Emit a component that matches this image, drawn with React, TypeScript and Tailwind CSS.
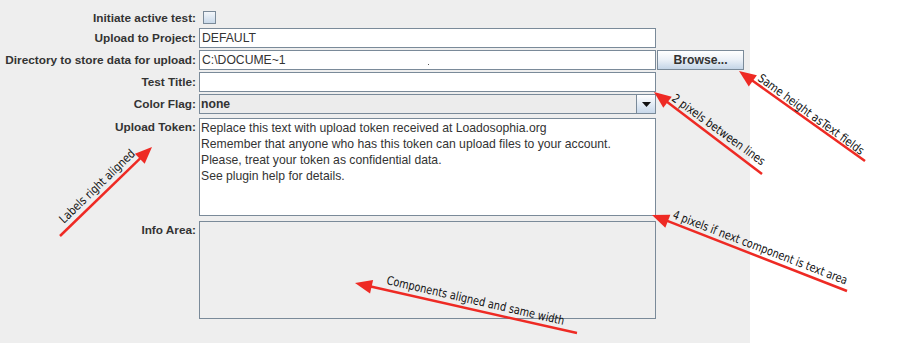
import React from 'react';

const RED = '#ee2a24';

type Note = {
  x1: number; y1: number; x2: number; y2: number;
  text: string; tx: number; ty: number; angle: number; len: number;
};

const notes: Note[] = [
  { x1: 865, y1: 161, x2: 739, y2: 71, text: 'Same height asText fields', tx: 757, ty: 80, angle: 36, len: 128 },
  { x1: 762, y1: 174, x2: 654, y2: 92, text: '2 pixels between lines', tx: 671, ty: 100, angle: 36, len: 112 },
  { x1: 60, y1: 236, x2: 152, y2: 147, text: 'Labels right aligned', tx: 64, ty: 224, angle: -44, len: 100 },
  { x1: 847, y1: 291, x2: 652, y2: 215, text: '4 pixels if next component is text area', tx: 672, ty: 218, angle: 21, len: 186 },
  { x1: 577, y1: 333, x2: 355, y2: 283, text: 'Components aligned and same width', tx: 386, ty: 284, angle: 13, len: 182 },
];

function Arrow({ n }: { n: Note }) {
  const dx = n.x2 - n.x1;
  const dy = n.y2 - n.y1;
  const d = Math.hypot(dx, dy);
  const ux = dx / d;
  const uy = dy / d;
  const bx = n.x2 - ux * 17;
  const by = n.y2 - uy * 17;
  const px = -uy * 7;
  const py = ux * 7;
  return (
    <g>
      <line x1={n.x1} y1={n.y1} x2={bx + ux * 2} y2={by + uy * 2} stroke={RED} strokeWidth={2.5} />
      <polygon points={`${n.x2},${n.y2} ${bx + px},${by + py} ${bx - px},${by - py}`} fill={RED} />
      <text
        x={n.tx}
        y={n.ty}
        transform={`rotate(${n.angle} ${n.tx} ${n.ty})`}
        textLength={n.len}
        lengthAdjust="spacingAndGlyphs"
        fontSize={12}
        fontFamily="'DejaVu Sans', Verdana, sans-serif"
        fill="#111"
      >
        {n.text}
      </text>
    </g>
  );
}

function Label({ children, top }: { children: React.ReactNode; top?: boolean }) {
  return (
    <div className={`w-[196px] shrink-0 text-right font-bold text-[11.8px] leading-[16px] text-[#333333] ${top ? 'pt-px' : ''}`}>
      {children}
    </div>
  );
}

function Field({ value }: { value?: string }) {
  return (
    <div className="ml-[3px] w-[457px] h-[20px] bg-white border border-[#7a8a99] px-[2px] text-[12.2px] leading-[18px] text-[#333333]">
      {value}
    </div>
  );
}

export default function App() {
  return (
    <div className="relative w-[903px] h-[343px] bg-white font-['Liberation_Sans',Arial,sans-serif] overflow-hidden">
      <div className="w-[750px] h-[343px] bg-[#eeeeee] pt-[9px]">
        <div className="flex items-center h-[17px] mb-[2px]">
          <Label>Initiate active test:</Label>
          <div className="ml-[7px] w-[13px] h-[13px] border border-[#7a8a99] bg-gradient-to-b from-[#f3f6fa] to-[#c9d9ea]" />
        </div>

        <div className="flex items-center h-[20px] mb-[2px]">
          <Label>Upload to Project:</Label>
          <Field value="DEFAULT" />
        </div>

        <div className="flex items-center h-[20px] mb-[2px]">
          <Label>Directory to store data for upload:</Label>
          <Field value="C:\DOCUME~1" />
          <button className="ml-px w-[87px] h-[20px] border border-[#7a8a99] bg-gradient-to-b from-[#ffffff] via-[#eaf0f7] to-[#c4d5e7] font-bold text-[12.2px] leading-[18px] text-[#333333]">
            Browse...
          </button>
        </div>

        <div className="flex items-center h-[20px] mb-[2px]">
          <Label>Test Title:</Label>
          <Field />
        </div>

        <div className="flex items-center h-[20px] mb-[4px]">
          <Label>Color Flag:</Label>
          <div className="ml-[3px] w-[457px] h-[20px] flex border border-[#7a8a99] bg-[#ececec]">
            <div className="flex-1 px-[1px] font-bold text-[12.2px] leading-[18px] text-[#333333]">none</div>
            <div className="w-[19px] h-full border-l border-[#7a8a99] bg-gradient-to-b from-[#ffffff] to-[#c8d8ea] flex items-center justify-center">
              <svg width="9" height="5" viewBox="0 0 9 5"><polygon points="0,0 9,0 4.5,5" fill="#111" /></svg>
            </div>
          </div>
        </div>

        <div className="flex items-start h-[98px] mb-[5px]">
          <Label top>Upload Token:</Label>
          <div className="ml-[3px] w-[457px] h-[98px] bg-white border border-[#7a8a99] px-[1px] pt-px text-[12.2px] leading-[16px] text-[#333333]">
            <div>Replace this text with upload token received at Loadosophia.org</div>
            <div>Remember that anyone who has this token can upload files to your account.</div>
            <div>Please, treat your token as confidential data.</div>
            <div>See plugin help for details.</div>
          </div>
        </div>

        <div className="flex items-start h-[98px]">
          <Label top>Info Area:</Label>
          <div className="ml-[3px] w-[457px] h-[98px] bg-[#eeeeee] border border-[#7a8a99]" />
        </div>
      </div>

      <svg className="absolute inset-0 pointer-events-none" width="903" height="343">
        <rect x="428" y="64" width="1" height="1" fill="#555" />
        {notes.map((n) => (
          <Arrow key={n.text} n={n} />
        ))}
      </svg>
    </div>
  );
}
